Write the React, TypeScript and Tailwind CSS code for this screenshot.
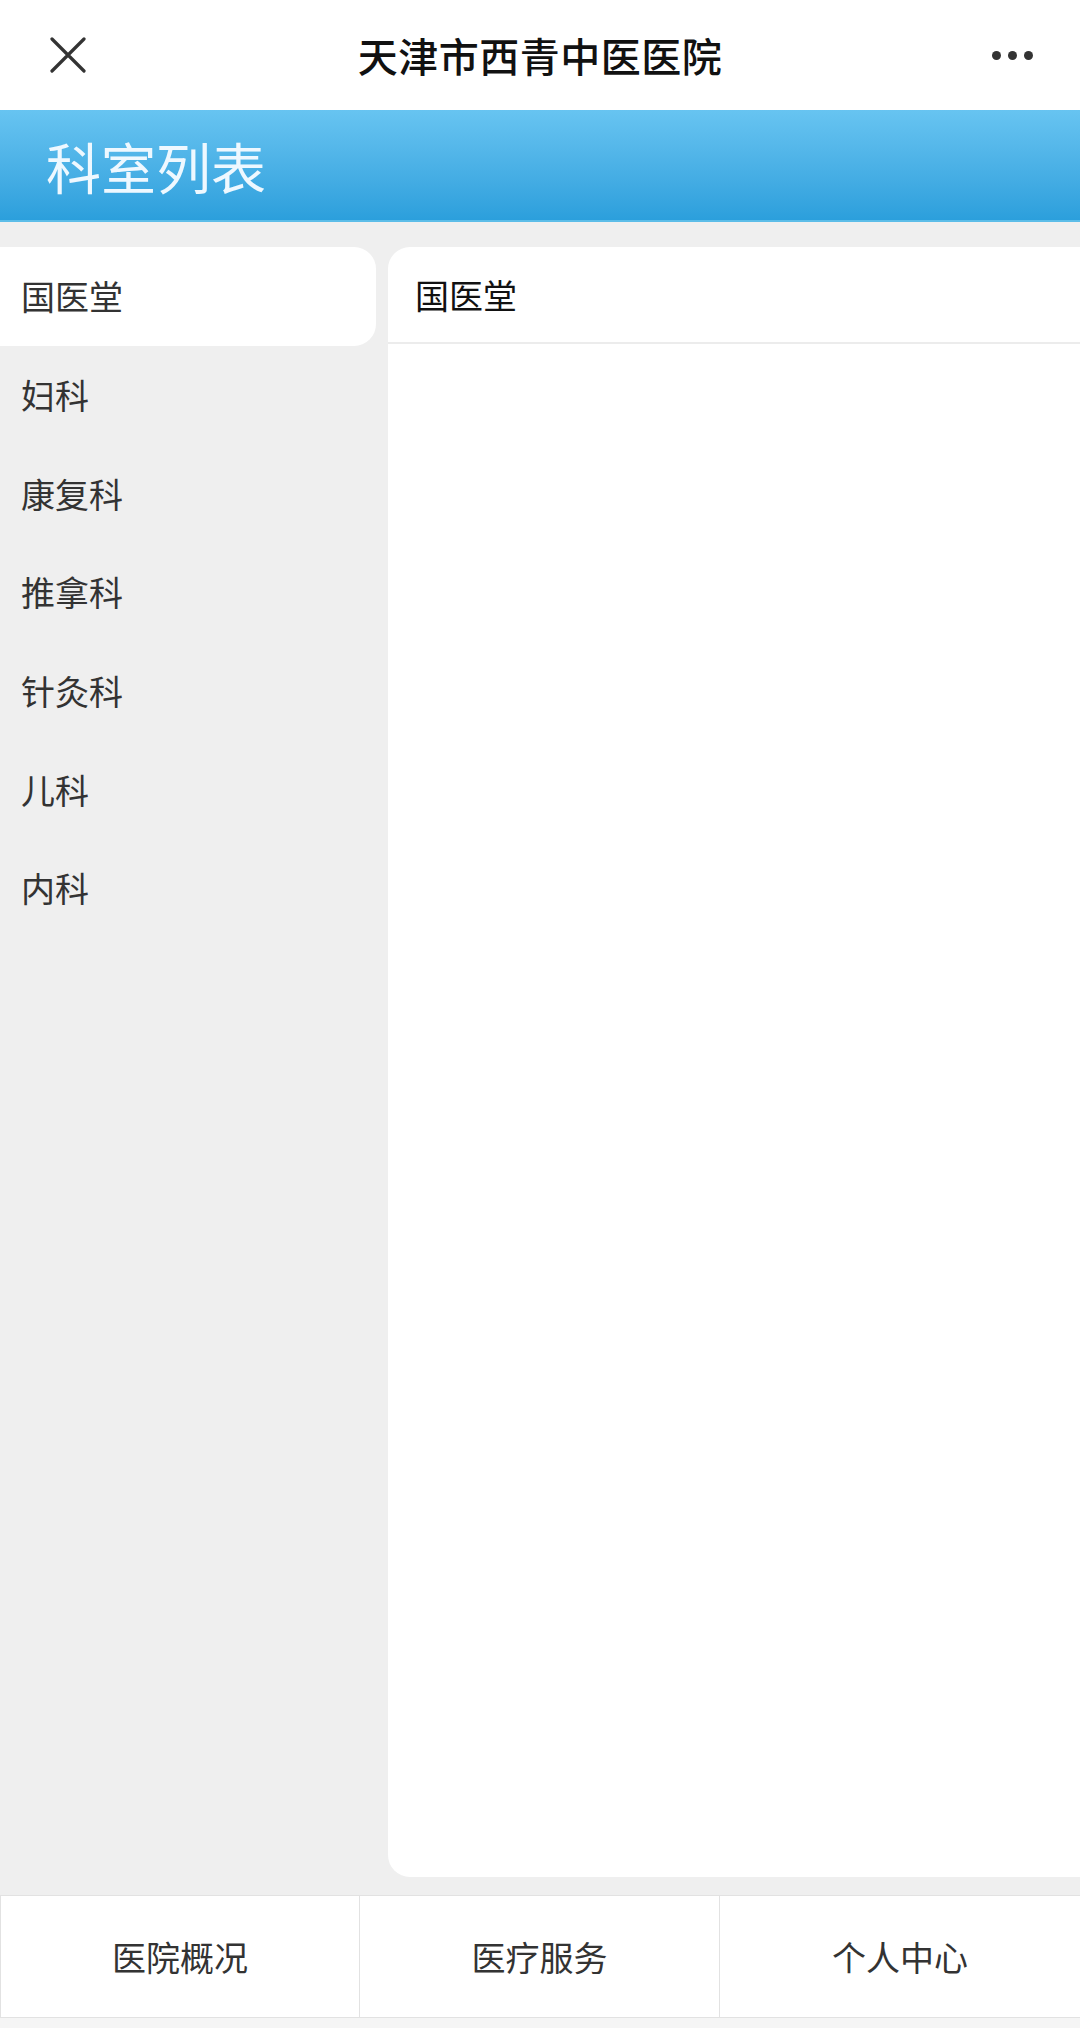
import React from "react";

const font = { fontFamily: '"Noto Sans CJK SC", "Noto Sans", sans-serif' };

const depts = ["国医堂", "妇科", "康复科", "推拿科", "针灸科", "儿科", "内科"];

export default function App() {
  const selected = 0;
  return (
    <div className="w-[1080px] h-[2028px] bg-[#efefef] flex flex-col overflow-hidden" style={font}>
      {/* Top header */}
      <div className="h-[110px] bg-white grid grid-cols-[1fr_auto_1fr] items-center px-[47px] shrink-0">
        <div className="flex items-center">
          <svg width="36" height="36" viewBox="0 0 36 36" className="ml-[3px]">
            <path d="M2 2 L34 34 M34 2 L2 34" stroke="#333" strokeWidth="3.2" strokeLinecap="round" />
          </svg>
        </div>
        <div className="text-[40px] font-medium text-[#111] leading-none tracking-[0.5px]">天津市西青中医医院</div>
        <div className="flex justify-end items-center gap-[7px]">
          <span className="w-[9px] h-[9px] rounded-full bg-[#333]" />
          <span className="w-[9px] h-[9px] rounded-full bg-[#333]" />
          <span className="w-[9px] h-[9px] rounded-full bg-[#333]" />
        </div>
      </div>

      {/* Banner */}
      <div className="h-[112px] shrink-0 bg-gradient-to-b from-[#67c4f1] to-[#2b9fdc] border-b-[2px] border-[#5cbde8] flex items-center pl-[46px]">
        <span className="text-[55px] font-normal text-[#eef8ff] leading-none">科室列表</span>
      </div>

      {/* Body */}
      <div className="flex h-[1673px] shrink-0">
        <div className="w-[376px] pt-[25px] flex flex-col">
          {depts.map((d, i) => (
            <div
              key={d}
              className={
                "h-[98.7px] flex items-center pl-[21px] text-[34px] text-[#333] leading-none " +
                (i === selected ? "bg-white rounded-r-[22px] text-[#222]" : "")
              }
            >
              {d}
            </div>
          ))}
        </div>
        <div className="flex-1 ml-[12px] mt-[25px] mb-[18px] bg-white rounded-l-[22px] flex flex-col">
          <div className="h-[97px] border-b-2 border-[#ececec] flex items-center pl-[27px] text-[34px] text-[#111] leading-none">
            国医堂
          </div>
        </div>
      </div>

      {/* Bottom nav */}
      <div className="h-[123px] shrink-0 grid grid-cols-3 bg-white border-t border-b border-[#e2e2e2]">
        <div className="flex items-center justify-center text-[34px] text-[#333] border-l border-r border-[#e2e2e2]">医院概况</div>
        <div className="flex items-center justify-center text-[34px] text-[#333] border-r border-[#e2e2e2]">医疗服务</div>
        <div className="flex items-center justify-center text-[34px] text-[#333]">个人中心</div>
      </div>
      <div className="flex-1 bg-[#f5f5f5]" />
    </div>
  );
}
